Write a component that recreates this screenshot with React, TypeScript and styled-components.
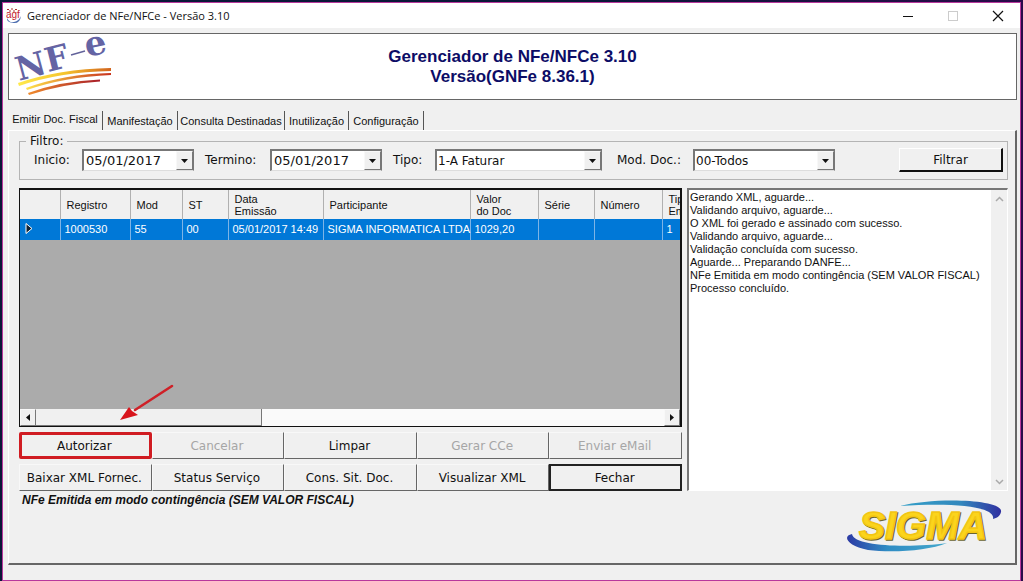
import React from "react";
import styled, { createGlobalStyle, css } from "styled-components";

const sans = `"Liberation Sans", Arial, sans-serif`;
const verdana = `"DejaVu Sans", Verdana, sans-serif`;

const GlobalStyle = createGlobalStyle`
  * { box-sizing: border-box; }
  body { margin: 0; background: #0a1638; }
  button, input, select, textarea { margin: 0; border-radius: 0; color: inherit; font: inherit; }
`;

const Desktop = styled.div`
  display: flex;
  min-height: 100vh;
  padding: 2px 2px 0;
  background: linear-gradient(90deg, #0a1638 60%, #2a0a4a);
`;

const Window = styled.main`
  display: flex;
  flex: 1;
  flex-direction: column;
  min-width: 0;
  border: 1px solid #b8389c;
  background: #f0f0f0;
  color: #111;
  font: 11px/13px ${sans};
`;

const TitleBar = styled.header`
  display: flex;
  align-items: center;
  height: 25px;
  padding-left: 3px;
  background: #fff;
`;

const WindowTitle = styled.h1`
  flex: 1;
  margin: 0 0 0 5px;
  font: 11px/16px "Open Sans", "Noto Sans", sans-serif;
  color: #111;
`;

const CaptionButton = styled.button`
  display: flex;
  align-items: center;
  justify-content: center;
  width: 45px;
  height: 25px;
  padding: 0;
  border: 0;
  background: transparent;
`;

const Body = styled.div`
  display: flex;
  flex: 1;
  flex-direction: column;
  padding: 5px 3px 15px 5px;
`;

const Banner = styled.section`
  display: grid;
  grid-template-columns: 1fr auto 1fr;
  align-items: center;
  height: 67px;
  border: 1px solid #666;
  background: #fff;
`;

const BannerTitle = styled.h2`
  margin: 0;
  color: #0c0c66;
  font: bold 17px/20px ${sans};
  text-align: center;
`;

const TabList = styled.div`
  display: flex;
  margin-top: 11px;
`;

const Tab = styled.button<{ $width: number; $active?: boolean }>`
  width: ${(p) => p.$width}px;
  height: 19px;
  padding: ${(p) => (p.$active ? "0 0 3px" : "1px 0 0")};
  border: 0;
  border-right: 1px solid #555;
  background: #f0f0f0;
  white-space: nowrap;
`;

const Panel = styled.section`
  display: flex;
  flex: 1;
  flex-direction: column;
  padding: 3px 7px 0 10px;
  border: 1px solid #fff;
  border-right: 2px solid #666;
  border-bottom: 2px solid #666;
`;

const Filter = styled.fieldset`
  display: block;
  min-width: 0;
  margin: 0;
  padding: 0 4px 7px 14px;
  border: 1px solid #b4b4b4;
  font: 12px/14px ${verdana};
`;

const Legend = styled.legend`
  margin-left: -8px;
  padding: 0 4px;
`;

const FilterRow = styled.div`
  display: grid;
  grid-template-columns: 48px 112px 76px 112px 53px 167px 91px 142px 1fr;
  align-items: center;
`;

const FieldLabel = styled.label<{ $inset?: number }>`
  padding-left: ${(p) => p.$inset ?? 0}px;
  white-space: nowrap;
`;

const sunken = css`
  border: 1px solid #fff;
  border-top: 2px solid #777;
  border-left: 2px solid #777;
  background: #fff;
`;

const Combo = styled.div`
  display: grid;
  grid-template-columns: 1fr 17px;
  height: 22px;
  border: 2px solid #777;
  border-bottom: 1px solid #ddd;
  border-right: 1px solid #777;
  background: #fff;
`;

const ComboInput = styled.input`
  grid-area: 1 / 1;
  min-width: 0;
  width: 100%;
  padding: 0 0 0 2px;
  border: 0;
  background: transparent;
  font-size: 13px;
`;

const ComboSelect = styled.select`
  grid-area: 1 / 1 / 2 / 3;
  min-width: 0;
  padding: 0 17px 0 1px;
  border: 0;
  background: transparent;
  appearance: none;
`;

const arrowBox = css`
  display: flex;
  align-items: center;
  justify-content: center;
  padding: 0;
  border: 1px solid #f8f8f8;
  border-right-color: #777;
  border-bottom-color: #777;
  background: #f0f0f0;
`;

const ComboButton = styled.button`
  ${arrowBox}
  grid-area: 1 / 2;
`;

const ComboArrow = styled.span`
  ${arrowBox}
  grid-area: 1 / 2;
  pointer-events: none;
`;

const FilterButton = styled.button`
  justify-self: end;
  width: 104px;
  height: 24px;
  padding: 0;
  border: 1px solid #fff;
  border-right: 2px solid #111;
  border-bottom: 2px solid #111;
  background: #f0f0f0;
`;

const Workspace = styled.div`
  display: grid;
  flex: 1;
  grid-template-columns: minmax(0, 663fr) minmax(0, 321fr);
  gap: 5px;
  margin-top: 8px;
`;

const LeftColumn = styled.div`
  position: relative;
  display: flex;
  flex-direction: column;
`;

const GridFrame = styled.div`
  display: flex;
  flex: 1;
  flex-direction: column;
  min-height: 200px;
  border: 1px solid #111;
  border-top-width: 2px;
  border-right-width: 2px;
  background: #ababab;
`;

const GridScroll = styled.div`
  flex: 1;
  overflow: hidden;
`;

const DocTable = styled.table`
  width: 702px;
  border-collapse: collapse;
  table-layout: fixed;
`;

const Th = styled.th`
  height: 29px;
  padding: 1px 0 0 6px;
  border-right: 1px solid #b0b0b0;
  background: #f0f0f0;
  font-weight: normal;
  line-height: 12px;
  text-align: left;
`;

const Td = styled.td`
  height: 21px;
  padding: 0 0 0 4px;
  border-right: 1px solid #7db4e6;
  background: #0078d7;
  color: #fff;
  white-space: nowrap;
`;

const HScroll = styled.div`
  display: grid;
  grid-template-columns: 16px 226px 1fr 16px;
  height: 17px;
  background: #fafafa;
`;

const ScrollButton = styled.button`
  ${arrowBox}
`;

const Thumb = styled.div`
  border-right: 1px solid #777;
  border-bottom: 1px solid #777;
  background: #f0f0f0;
`;

const Actions = styled.div`
  display: grid;
  grid-template-columns: repeat(5, 1fr);
  row-gap: 5px;
  margin-top: 5px;
`;

const ActionButton = styled.button<{ $kind?: "marked" | "default" }>`
  height: 27px;
  padding: 0 2px 0 0;
  border: 1px solid #f8f8f8;
  border-right: 1px solid #666;
  border-bottom: 1px solid #666;
  background: #f0f0f0;
  font: 12px/14px ${verdana};
  white-space: nowrap;
  &:disabled { color: #a6a6a6; }
  ${(p) => p.$kind === "marked" && css`border: 3px solid #d01c22; border-radius: 2px;`}
  ${(p) => p.$kind === "default" && css`border: 2px solid #222;`}
`;

const Pointer = styled.svg`
  position: absolute;
  left: 100px;
  bottom: 69px;
`;

const LogFrame = styled.div`
  ${sunken}
  display: grid;
  grid-template-columns: 1fr 16px;
`;

const Log = styled.textarea`
  padding: 1px 0 0 1px;
  border: 0;
  outline: 0;
  background: #fff;
  resize: none;
  overflow: hidden;
  line-height: 13px;
`;

const VScroll = styled.div`
  display: flex;
  flex-direction: column;
  justify-content: space-between;
  background: #f0f0f0;
`;

const VScrollButton = styled.button`
  height: 17px;
  padding: 0;
  border: 0;
  background: transparent;
  line-height: 0;
`;

const Footer = styled.footer`
  display: flex;
  justify-content: space-between;
  height: 72px;
`;

const Status = styled.p`
  margin: 3px 0 0 3px;
  font: italic bold 12px/13px ${sans};
`;

const SigmaLogo = styled.svg`
  margin: 9px 6px 0 0;
`;

const DownArrow = () => (
  <svg width="7" height="4" aria-hidden="true"><path d="M0 0h7L3.5 4z" fill="#111" /></svg>
);

const DateField = ({ id, label, inset }: { id: string; label: string; inset?: number }) => (
  <>
    <FieldLabel htmlFor={id} $inset={inset}>{label}</FieldLabel>
    <Combo>
      <ComboInput id={id} defaultValue="05/01/2017" />
      <ComboButton type="button" aria-label="Abrir calendário"><DownArrow /></ComboButton>
    </Combo>
  </>
);

const SelectField = ({ id, label, inset, option }: { id: string; label: string; inset: number; option: string }) => (
  <>
    <FieldLabel htmlFor={id} $inset={inset}>{label}</FieldLabel>
    <Combo>
      <ComboSelect id={id}><option>{option}</option></ComboSelect>
      <ComboArrow><DownArrow /></ComboArrow>
    </Combo>
  </>
);

const tabs = [
  { name: "Emitir Doc. Fiscal", width: 95 },
  { name: "Manifestação", width: 75 },
  { name: "Consulta Destinadas", width: 107 },
  { name: "Inutilização", width: 64 },
  { name: "Configuração", width: 75 },
];

const columns = [
  { title: "", width: 40, value: "" },
  { title: "Registro", width: 70, value: "1000530" },
  { title: "Mod", width: 52, value: "55" },
  { title: "ST", width: 46, value: "00" },
  { title: "Data\nEmissão", width: 95, value: "05/01/2017 14:49" },
  { title: "Participante", width: 147, value: "SIGMA INFORMATICA LTDA" },
  { title: "Valor\ndo Doc", width: 68, value: "1029,20" },
  { title: "Série", width: 56, value: "" },
  { title: "Número", width: 68, value: "" },
  { title: "Tipo\nEmissão", width: 60, value: "1" },
];

const actions: { name: string; disabled?: boolean; kind?: "marked" | "default" }[] = [
  { name: "Autorizar", kind: "marked" },
  { name: "Cancelar", disabled: true },
  { name: "Limpar" },
  { name: "Gerar CCe", disabled: true },
  { name: "Enviar eMail", disabled: true },
  { name: "Baixar XML Fornec." },
  { name: "Status Serviço" },
  { name: "Cons. Sit. Doc." },
  { name: "Visualizar XML" },
  { name: "Fechar", kind: "default" },
];

const log = `Gerando XML, aguarde...
Validando arquivo, aguarde...
O XML foi gerado e assinado com sucesso.
Validando arquivo, aguarde...
Validação concluída com sucesso.
Aguarde... Preparando DANFE...
NFe Emitida em modo contingência (SEM VALOR FISCAL)
Processo concluído.`;

export default function App() {
  return (
    <Desktop>
      <GlobalStyle />
      <Window>
        <TitleBar>
          <svg width="16" height="17" viewBox="0 0 16 17" aria-hidden="true">
            <path d="M1 11Q3 16 8 15T15 9Q14 17 7 16T1 11" fill="#4b6cae" />
            <text x="0" y="11" fill="#c3202b" fontFamily="Liberation Sans, Arial, sans-serif" fontSize="10">agf</text>
            <path d="M1 2.500h2M5 2h2M9 2.500h2M3 4h2M7 4h2" stroke="#a33" />
          </svg>
          <WindowTitle>Gerenciador de NFe/NFCe - Versão 3.10</WindowTitle>
          <CaptionButton aria-label="Minimizar">
            <svg width="12" height="12"><path d="M1 6.500h10" stroke="#111" /></svg>
          </CaptionButton>
          <CaptionButton aria-label="Maximizar" disabled>
            <svg width="12" height="12"><rect x="1.500" y="1.500" width="9" height="9" fill="none" stroke="#ccc" /></svg>
          </CaptionButton>
          <CaptionButton aria-label="Fechar janela">
            <svg width="12" height="12"><path d="M1 1l10 10M11 1L1 11" stroke="#111" strokeWidth="1.200" /></svg>
          </CaptionButton>
        </TitleBar>
        <Body>
          <Banner>
            <svg width="106" height="65" viewBox="0 0 106 65" role="img" aria-label="NF-e">
              <defs>
                <linearGradient id="stripe1"><stop stopColor="#ffe94a" /><stop offset="0.5" stopColor="#f5c52e" /><stop offset="1" stopColor="#d2641e" /></linearGradient>
                <linearGradient id="stripe2"><stop stopColor="#ffe34a" /><stop offset="1" stopColor="#c8321e" /></linearGradient>
                <linearGradient id="stripe3"><stop stopColor="#f08c2e" /><stop offset="1" stopColor="#a81e28" /></linearGradient>
              </defs>
              <g fill="#6464a4" fontFamily="DejaVu Serif, serif" fontWeight="bold">
                <text transform="translate(10 47) rotate(-15)" fontSize="33">N</text>
                <text transform="translate(39 38) rotate(-14)" fontSize="33">F</text>
                <text transform="translate(78 23) rotate(-12)" fontSize="34">e</text>
              </g>
              <path d="M62 21L76 17" stroke="#62629a" strokeWidth="1.400" />
              <path d="M9 49Q50 35 102 34V37Q50 38 10 52Z" fill="url(#stripe1)" />
              <path d="M17 54Q55 40 102 39V41Q55 43 18 56Z" fill="url(#stripe2)" />
              <path d="M19 59Q52 47 91 45.500V47.500Q53 50 20 61Z" fill="url(#stripe3)" />
            </svg>
            <BannerTitle>Gerenciador de NFe/NFCe 3.10<br />Versão(GNFe 8.36.1)</BannerTitle>
          </Banner>
          <TabList role="tablist">
            {tabs.map((t, i) => (
              <Tab key={t.name} role="tab" aria-selected={i === 0} $width={t.width} $active={i === 0}>{t.name}</Tab>
            ))}
          </TabList>
          <Panel>
            <Filter>
              <Legend>Filtro:</Legend>
              <FilterRow>
                <DateField id="inicio" label="Inicio:" />
                <DateField id="termino" label="Termino:" inset={11} />
                <SelectField id="tipo" label="Tipo:" inset={11} option="1-A Faturar" />
                <SelectField id="modelo" label="Mod. Doc.:" inset={15} option="00-Todos" />
                <FilterButton type="button">Filtrar</FilterButton>
              </FilterRow>
            </Filter>
            <Workspace>
              <LeftColumn>
                <GridFrame>
                  <GridScroll>
                    <DocTable>
                      <colgroup>
                        {columns.map((c, i) => <col key={i} width={c.width} />)}
                      </colgroup>
                      <thead>
                        <tr>
                          {columns.map((c, i) => (
                            <Th key={i} scope="col">
                              {c.title.split("\n").map((line, n) => <React.Fragment key={n}>{n > 0 && <br />}{line}</React.Fragment>)}
                            </Th>
                          ))}
                        </tr>
                      </thead>
                      <tbody>
                        <tr>
                          {columns.map((c, i) => (
                            <Td key={i}>
                              {i === 0 ? (
                                <svg width="9" height="13" aria-label="Linha atual"><path d="M2 1.500L8 6.500L2 11.500Z" fill="#123" stroke="#fff" /></svg>
                              ) : c.value}
                            </Td>
                          ))}
                        </tr>
                      </tbody>
                    </DocTable>
                  </GridScroll>
                  <HScroll>
                    <ScrollButton type="button" aria-label="Rolar para a esquerda">
                      <svg width="4" height="7"><path d="M4 0v7L0 3.500z" fill="#111" /></svg>
                    </ScrollButton>
                    <Thumb />
                    <span />
                    <ScrollButton type="button" aria-label="Rolar para a direita">
                      <svg width="4" height="7"><path d="M0 0v7L4 3.500z" fill="#111" /></svg>
                    </ScrollButton>
                  </HScroll>
                </GridFrame>
                <Actions>
                  {actions.map((a) => (
                    <ActionButton key={a.name} type="button" disabled={a.disabled} $kind={a.kind}>{a.name}</ActionButton>
                  ))}
                </Actions>
                <Pointer width="56" height="40" aria-hidden="true">
                  <path d="M53 4L16 28" stroke="#cf2027" strokeWidth="2.600" strokeLinecap="round" />
                  <path d="M1 38L10 25L13 29L19 33Z" fill="#d8141c" />
                </Pointer>
              </LeftColumn>
              <LogFrame>
                <Log readOnly aria-label="Mensagens" value={log} />
                <VScroll>
                  <VScrollButton type="button" aria-label="Rolar para cima">
                    <svg width="9" height="6"><path d="M1 5l3.500-3.500L8 5" fill="none" stroke="#aaa" strokeWidth="1.500" /></svg>
                  </VScrollButton>
                  <VScrollButton type="button" aria-label="Rolar para baixo">
                    <svg width="9" height="6"><path d="M1 1l3.500 3.500L8 1" fill="none" stroke="#aaa" strokeWidth="1.500" /></svg>
                  </VScrollButton>
                </VScroll>
              </LogFrame>
            </Workspace>
            <Footer>
              <Status>NFe Emitida em modo contingência (SEM VALOR FISCAL)</Status>
              <SigmaLogo width="158" height="56" viewBox="0 0 158 56" role="img" aria-label="Sigma">
                <defs>
                  <linearGradient id="arcTop"><stop stopColor="#35a0c8" /><stop offset="0.6" stopColor="#3288bd" /><stop offset="1" stopColor="#3030a0" /></linearGradient>
                  <linearGradient id="arcBottom"><stop stopColor="#2c3aa4" /><stop offset="0.4" stopColor="#2f8cc4" /><stop offset="1" stopColor="#45a8cc" /></linearGradient>
                </defs>
                <path d="M56 6C90 -3 160 -1 157 12C156 16 153 18 149 19C152 7 112 2 56 6Z" fill="url(#arcTop)" />
                <path d="M8 34C-2 36 3 46 24 50C48 53 84 51 103 43C68 48 10 47 8 34Z" fill="url(#arcBottom)" />
                <g fontFamily="Liberation Sans, Arial, sans-serif" fontStyle="italic" fontWeight="bold" fontSize="39" strokeWidth="1.500">
                  <text x="16" y="40" fill="#6b6430" stroke="#6b6430">SIGMA</text>
                  <text x="15" y="39" fill="#fbd41c" stroke="#f3c512">SIGMA</text>
                </g>
              </SigmaLogo>
            </Footer>
          </Panel>
        </Body>
      </Window>
    </Desktop>
  );
}
